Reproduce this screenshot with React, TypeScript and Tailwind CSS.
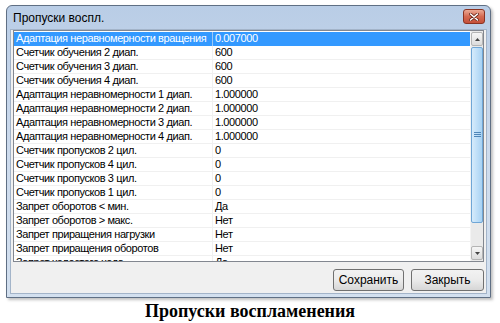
import React from "react";

const rows: [string, string][] = [
  ["Адаптация неравномерности вращения", "0.007000"],
  ["Счетчик обучения 2 диап.", "600"],
  ["Счетчик обучения 3 диап.", "600"],
  ["Счетчик обучения 4 диап.", "600"],
  ["Адаптация неравномерности 1 диап.", "1.000000"],
  ["Адаптация неравномерности 2 диап.", "1.000000"],
  ["Адаптация неравномерности 3 диап.", "1.000000"],
  ["Адаптация неравномерности 4 диап.", "1.000000"],
  ["Счетчик пропусков 2 цил.", "0"],
  ["Счетчик пропусков 4 цил.", "0"],
  ["Счетчик пропусков 3 цил.", "0"],
  ["Счетчик пропусков 1 цил.", "0"],
  ["Запрет оборотов < мин.", "Да"],
  ["Запрет оборотов > макс.", "Нет"],
  ["Запрет приращения нагрузки", "Нет"],
  ["Запрет приращения оборотов", "Нет"],
  ["Запрет холостого хода", "Да"],
];

export default function App() {
  return (
    <div className="w-[500px] h-[323px] bg-white overflow-hidden font-['Liberation_Sans',Arial,sans-serif]">
      <div className="ml-[6px] mt-[5px] w-[485px] h-[293px] rounded-t-[6px] border border-[#5f6f84] bg-gradient-to-b from-[#b9cde6] via-[#cddbed] to-[#d3e0ef] flex flex-col shadow-[2px_2px_3px_rgba(0,0,0,0.25)]">
        <div className="h-[23px] flex items-start justify-between pl-[6px] pr-[5px]">
          <span className="text-[12px] leading-none text-black mt-[6px]">Пропуски воспл.</span>
          <div className="mt-[3px] w-[22px] h-[15px] rounded-[3px] border border-[#8a3322] bg-gradient-to-b from-[#eba995] via-[#d46a52] to-[#c5503a] flex items-center justify-center">
            <svg width="10" height="8" viewBox="0 0 10 8">
              <path d="M1.5 1 L8.5 7 M8.5 1 L1.5 7" stroke="#6a2618" strokeWidth="3" strokeLinecap="round" />
              <path d="M1.5 1 L8.5 7 M8.5 1 L1.5 7" stroke="#ffffff" strokeWidth="1.6" strokeLinecap="round" />
            </svg>
          </div>
        </div>
        <div className="mx-[3px] mb-[3px] flex-1 bg-[#f0f0f0] border border-[#a3b4c9] flex flex-col px-[2px]">
          <div className="h-[232px] border border-[#828790] bg-white flex overflow-hidden">
            <div className="flex-1 pt-[1px] overflow-hidden">
              {rows.map(([k, v], i) => {
                const sel = i === 0;
                return (
                  <div key={i} className="h-[14px] flex text-[11px] leading-[13px] tracking-[-0.4px]">
                    <div
                      className={
                        sel
                          ? "w-[199px] pl-[2px] whitespace-nowrap overflow-hidden bg-[#3399ff] text-white border-r border-[#9cc9f5]"
                          : "w-[199px] pl-[2px] whitespace-nowrap overflow-hidden text-black border-r border-b border-[#f0f0f0]"
                      }
                    >
                      {k}
                    </div>
                    <div
                      className={
                        sel
                          ? "flex-1 pl-[2px] bg-[#3399ff] text-white"
                          : "flex-1 pl-[2px] text-black border-b border-[#f0f0f0]"
                      }
                    >
                      {v}
                    </div>
                  </div>
                );
              })}
            </div>
            <div className="w-[13px] bg-[#eaeaea] flex flex-col pt-[1px] pb-[1px] border-l border-[#f4f4f4]">
              <div className="h-[14px] rounded-[2px] border border-[#b4b4b4] bg-gradient-to-b from-[#f6f6f6] to-[#dcdcdc] flex items-center justify-center">
                <svg width="5" height="3" viewBox="0 0 5 3"><path d="M0 3 L2.5 0 L5 3 Z" fill="#444" /></svg>
              </div>
              <div className="h-[176px] mt-[1px] rounded-[2px] border border-[#6fa6d6] bg-gradient-to-r from-[#d6ebfb] via-[#bfdff8] to-[#a8d2f3] flex items-center justify-center">
                <svg width="7" height="6" viewBox="0 0 7 6">
                  <path d="M0 0.5 H7 M0 2.5 H7 M0 4.5 H7" stroke="#4f86b8" strokeWidth="1" />
                </svg>
              </div>
              <div className="flex-1" />
              <div className="h-[14px] rounded-[2px] border border-[#b4b4b4] bg-gradient-to-b from-[#f6f6f6] to-[#dcdcdc] flex items-center justify-center">
                <svg width="5" height="3" viewBox="0 0 5 3"><path d="M0 0 L2.5 3 L5 0 Z" fill="#444" /></svg>
              </div>
            </div>
          </div>
          <div className="mt-[7px] flex justify-end gap-[7px]">
            <button className="w-[71px] h-[22px] rounded-[3px] border border-[#707070] bg-gradient-to-b from-[#f2f2f2] via-[#ebebeb] to-[#d6d6d6] text-[12px] text-black leading-none font-['Liberation_Sans',Arial,sans-serif]">
              Сохранить
            </button>
            <button className="w-[73px] h-[22px] rounded-[3px] border border-[#707070] bg-gradient-to-b from-[#f2f2f2] via-[#ebebeb] to-[#d6d6d6] text-[12px] text-black leading-none font-['Liberation_Sans',Arial,sans-serif]">
              Закрыть
            </button>
          </div>
        </div>
      </div>
      <div className="mt-[2px] text-center font-['Liberation_Serif','Times_New_Roman',serif] font-bold text-[18px] leading-[22px] text-black">
        Пропуски воспламенения
      </div>
    </div>
  );
}
